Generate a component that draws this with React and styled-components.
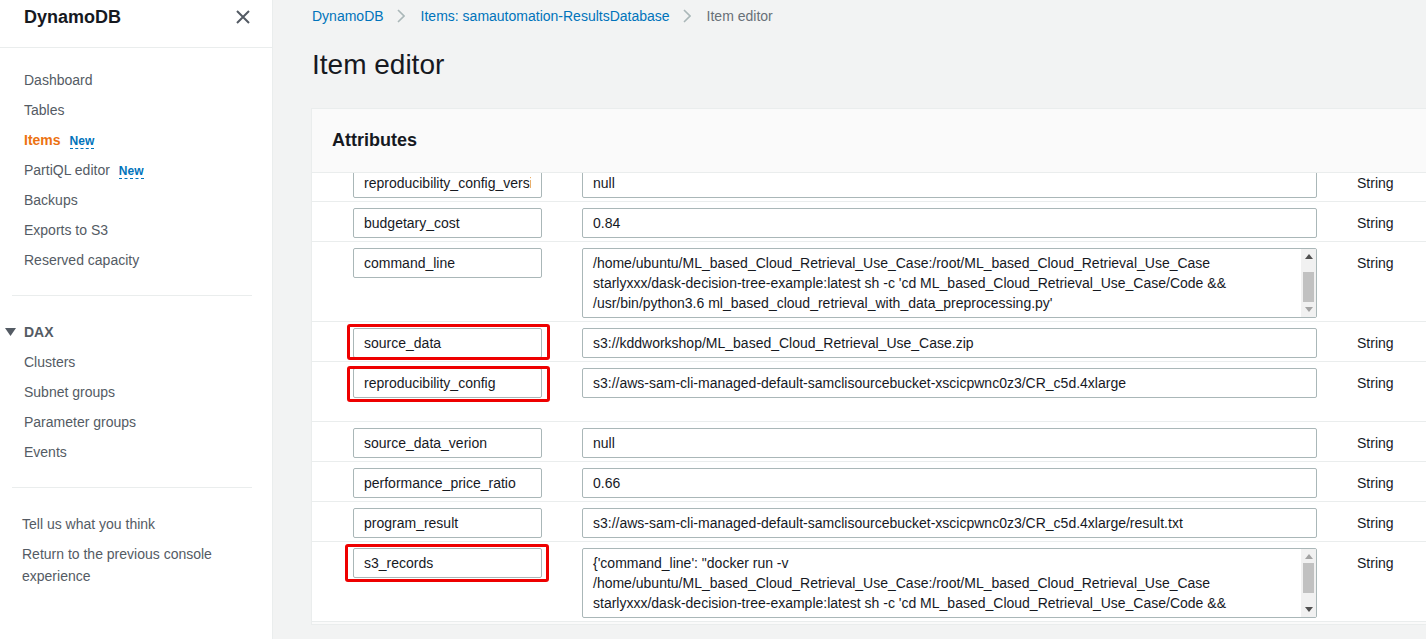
import React from "react"
import styled, { createGlobalStyle, css } from "styled-components"

const GlobalStyle = createGlobalStyle`
  html, body {
    margin: 0;
    padding: 0;
    height: 100%;
    overflow: hidden;
    font-family: "Liberation Sans", Arial, sans-serif;
    font-size: 14px;
    color: #16191f;
  }
  * { box-sizing: border-box; }
`

const colors = {
  text: "#16191f",
  nav: "#545b64",
  link: "#0073bb",
  orange: "#ec7211",
  border: "#eaeded",
  input: "#aab7b8",
  grey: "#687078",
  mark: "#ee0000",
}

const Page = styled.div`
  display: flex;
  height: 639px;
  overflow: hidden;
`

const Sidebar = styled.nav`
  width: 273px;
  flex: none;
  background: #fff;
  border-right: 1px solid ${colors.border};
  display: flex;
  flex-direction: column;
`

const SideHeader = styled.div`
  height: 48px;
  display: flex;
  align-items: center;
  justify-content: space-between;
  padding: 0 22px 13px 24px;
  border-bottom: 1px solid ${colors.border};
  font-size: 18px;
  font-weight: bold;
  color: ${colors.text};
`

const CloseButton = styled.span`
  display: flex;
  color: ${colors.nav};
`

const NavList = styled.ul`
  list-style: none;
  margin: 0;
  padding: ${({ $top }) => $top || 0}px 0 0 24px;
`

const NavItem = styled.li`
  height: ${({ $h }) => $h || 30}px;
  display: flex;
  align-items: center;
  gap: 9px;
  color: ${({ $active }) => ($active ? colors.orange : colors.nav)};
  font-weight: ${({ $active }) => ($active ? "bold" : "normal")};
`

const NewTag = styled.span`
  color: ${colors.link};
  font-size: 12px;
  font-weight: bold;
  line-height: 14px;
  border-bottom: 1px dashed ${colors.link};
  margin-top: 3px;
`

const Divider = styled.hr`
  border: 0;
  border-top: 1px solid ${colors.border};
  margin: ${({ $top }) => $top}px 20px 0 12px;
`

const SectionTitle = styled.div`
  display: flex;
  align-items: center;
  height: 30px;
  margin-top: 21px;
  padding-left: 5px;
  gap: 8px;
  font-weight: bold;
  color: ${colors.nav};
`

const FooterLinks = styled.div`
  padding: 25px 20px 0 22px;
  color: ${colors.nav};
  line-height: 22px;
  & p {
    margin: 0 0 8px;
  }
`

const Main = styled.main`
  flex: 1;
  min-width: 0;
  background: #f2f3f3;
  padding: 7px 0 0 38px;
  overflow: hidden;
`

const Breadcrumbs = styled.div`
  display: flex;
  align-items: center;
  gap: 12px;
  line-height: 18px;
  padding-left: 1px;
  color: ${colors.grey};
`

const Crumb = styled.a`
  color: ${colors.link};
  text-decoration: none;
`

const Chevron = styled.span`
  display: flex;
  color: #aab7b8;
  margin: 0 4px 0 1px;
`

const Title = styled.h1`
  margin: 22px 0 0 1px;
  font-size: 28px;
  font-weight: normal;
  line-height: 36px;
  color: ${colors.text};
`

const Panel = styled.section`
  margin-top: 25px;
  width: 1160px;
  background: #fff;
  border: 1px solid ${colors.border};
  border-right: 0;
`

const PanelHeader = styled.header`
  height: 64px;
  display: flex;
  align-items: center;
  padding: 0 20px;
  background: #fafafa;
  font-size: 18px;
  font-weight: bold;
  border-bottom: 1px solid ${colors.border};
`

const PanelBody = styled.div`
  overflow: hidden;
  height: 451px;
`

const RowList = styled.div`
  margin-top: -11px;
`

const Row = styled.div`
  display: grid;
  grid-template-columns: 189px 735px auto;
  column-gap: 40px;
  align-items: start;
  height: ${({ $h }) => $h}px;
  padding: 6px 0 0 41px;
  border-bottom: 1px solid ${colors.border};
`

const KeyCell = styled.div`
  position: relative;
  ${({ $mark }) =>
    $mark &&
    css`
      &::after {
        content: "";
        position: absolute;
        top: ${$mark[0]}px;
        right: ${$mark[1]}px;
        bottom: ${$mark[2]}px;
        left: ${$mark[3]}px;
        border: 3px solid ${colors.mark};
        border-radius: 3px;
        pointer-events: none;
      }
    `}
`

const Field = styled.input`
  display: block;
  width: 100%;
  height: 30px;
  padding: 0 10px;
  border: 1px solid ${colors.input};
  border-radius: 2px;
  font: inherit;
  color: ${colors.text};
  background: #fff;
  outline: none;
`

const Area = styled.div`
  position: relative;
  height: 70px;
  border: 1px solid ${colors.input};
  border-radius: 2px;
  padding: 4px 24px 0 10px;
  line-height: 20px;
  overflow: hidden;
  white-space: nowrap;
`

const Track = styled.div`
  position: absolute;
  top: 0;
  right: 0;
  bottom: 0;
  width: 15px;
  background: #f1f1f1;
`

const Arrow = styled.span`
  position: absolute;
  left: 4px;
  width: 0;
  height: 0;
  border-left: 4px solid transparent;
  border-right: 4px solid transparent;
  ${({ $down, $color }) =>
    $down
      ? css`
          bottom: 5px;
          border-top: 5px solid ${$color};
        `
      : css`
          top: 5px;
          border-bottom: 5px solid ${$color};
        `}
`

const Thumb = styled.div`
  position: absolute;
  left: 2px;
  width: 11px;
  height: 30px;
  background: #c1c1c1;
`

const TypeCell = styled.div`
  line-height: 30px;
  color: ${colors.text};
`

const PanelFooter = styled.div`
  height: 20px;
  background: #fafafa;
`

const XIcon = () => (
  <svg width="14" height="14" viewBox="0 0 14 14">
    <path d="M1 1L13 13M13 1L1 13" stroke="currentColor" strokeWidth="2" />
  </svg>
)

const ChevronIcon = () => (
  <svg width="8" height="14" viewBox="0 0 8 14">
    <path d="M1 1L7 7L1 13" stroke="currentColor" strokeWidth="1.6" fill="none" />
  </svg>
)

const Caret = () => (
  <svg width="11" height="8" viewBox="0 0 11 8">
    <path d="M0 0H11L5.5 8Z" fill="#545b64" />
  </svg>
)

const TextArea = ({ lines, thumb, upColor, downColor }) => (
  <Area>
    {lines.map((l, i) => (
      <div key={i}>{l}</div>
    ))}
    <Track>
      <Arrow $color={upColor} />
      <Thumb style={{ top: thumb }} />
      <Arrow $down $color={downColor} />
    </Track>
  </Area>
)

const rows = [
  { key: "reproducibility_config_version", value: "null" },
  { key: "budgetary_cost", value: "0.84" },
  {
    key: "command_line",
    h: 80,
    lines: [
      "/home/ubuntu/ML_based_Cloud_Retrieval_Use_Case:/root/ML_based_Cloud_Retrieval_Use_Case",
      "starlyxxx/dask-decision-tree-example:latest sh -c 'cd ML_based_Cloud_Retrieval_Use_Case/Code &&",
      "/usr/bin/python3.6 ml_based_cloud_retrieval_with_data_preprocessing.py'",
    ],
    thumb: 23,
    up: "#505050",
    down: "#a3a3a3",
  },
  {
    key: "source_data",
    value: "s3://kddworkshop/ML_based_Cloud_Retrieval_Use_Case.zip",
    mark: [-4, -8, -2, -6],
  },
  {
    key: "reproducibility_config",
    value: "s3://aws-sam-cli-managed-default-samclisourcebucket-xscicpwnc0z3/CR_c5d.4xlarge",
    h: 60,
    mark: [-2, -8, -4, -6],
  },
  { key: "source_data_verion", value: "null" },
  { key: "performance_price_ratio", value: "0.66" },
  {
    key: "program_result",
    value: "s3://aws-sam-cli-managed-default-samclisourcebucket-xscicpwnc0z3/CR_c5d.4xlarge/result.txt",
  },
  {
    key: "s3_records",
    h: 80,
    mark: [-4, -7, -4, -8],
    lines: [
      "{'command_line': \"docker run -v",
      "/home/ubuntu/ML_based_Cloud_Retrieval_Use_Case:/root/ML_based_Cloud_Retrieval_Use_Case",
      "starlyxxx/dask-decision-tree-example:latest sh -c 'cd ML_based_Cloud_Retrieval_Use_Case/Code &&",
    ],
    thumb: 14,
    up: "#a3a3a3",
    down: "#505050",
  },
]

export default function App() {
  return (
    <>
      <GlobalStyle />
      <Page>
        <Sidebar>
          <SideHeader>
            DynamoDB
            <CloseButton>
              <XIcon />
            </CloseButton>
          </SideHeader>
          <NavList $top={17}>
            <NavItem>Dashboard</NavItem>
            <NavItem>Tables</NavItem>
            <NavItem $active>
              Items <NewTag>New</NewTag>
            </NavItem>
            <NavItem>
              PartiQL editor <NewTag>New</NewTag>
            </NavItem>
            <NavItem>Backups</NavItem>
            <NavItem>Exports to S3</NavItem>
            <NavItem>Reserved capacity</NavItem>
          </NavList>
          <Divider $top={20} />
          <SectionTitle>
            <Caret />
            DAX
          </SectionTitle>
          <NavList>
            <NavItem>Clusters</NavItem>
            <NavItem>Subnet groups</NavItem>
            <NavItem>Parameter groups</NavItem>
            <NavItem>Events</NavItem>
          </NavList>
          <Divider $top={20} />
          <FooterLinks>
            <p>Tell us what you think</p>
            <p>Return to the previous console experience</p>
          </FooterLinks>
        </Sidebar>
        <Main>
          <Breadcrumbs>
            <Crumb>DynamoDB</Crumb>
            <Chevron>
              <ChevronIcon />
            </Chevron>
            <Crumb>Items: samautomation-ResultsDatabase</Crumb>
            <Chevron>
              <ChevronIcon />
            </Chevron>
            <span>Item editor</span>
          </Breadcrumbs>
          <Title>Item editor</Title>
          <Panel>
            <PanelHeader>Attributes</PanelHeader>
            <PanelBody>
              <RowList>
                {rows.map((r) => (
                  <Row key={r.key} $h={r.h || 40}>
                    <KeyCell $mark={r.mark}>
                      <Field readOnly value={r.key} />
                    </KeyCell>
                    {r.lines ? (
                      <TextArea lines={r.lines} thumb={r.thumb} upColor={r.up} downColor={r.down} />
                    ) : (
                      <Field readOnly value={r.value} />
                    )}
                    <TypeCell>String</TypeCell>
                  </Row>
                ))}
              </RowList>
              <PanelFooter />
            </PanelBody>
          </Panel>
        </Main>
      </Page>
    </>
  )
}
